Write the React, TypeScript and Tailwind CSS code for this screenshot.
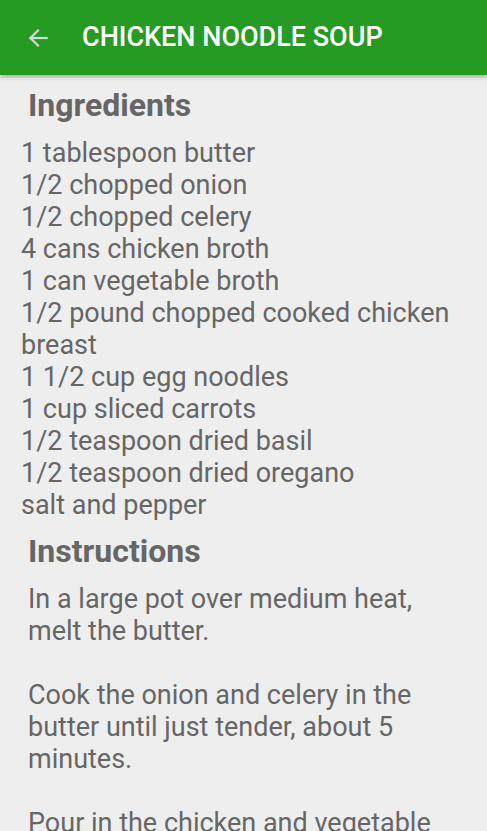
import React from "react";

const ingredients = [
  "1 tablespoon butter",
  "1/2 chopped onion",
  "1/2 chopped celery",
  "4 cans chicken broth",
  "1 can vegetable broth",
  "1/2 pound chopped cooked chicken breast",
  "1 1/2 cup egg noodles",
  "1 cup sliced carrots",
  "1/2 teaspoon dried basil",
  "1/2 teaspoon dried oregano",
  "salt and pepper",
];

const instructions = [
  "In a large pot over medium heat, melt the butter.",
  "Cook the onion and celery in the butter until just tender, about 5 minutes.",
  "Pour in the chicken and vegetable broths and stir in the chicken, noodles, carrots, basil, oregano, salt and pepper.",
];

export default function App() {
  return (
    <div
      className="w-[487px] h-[831px] overflow-hidden bg-[#eeeeee] text-[#666666]"
      style={{ fontFamily: "Roboto, 'Noto Sans', sans-serif" }}
    >
      <header className="relative z-10 h-[75px] bg-[#259b24] flex items-center shadow-[0_2px_4px_rgba(0,0,0,0.3)]">
        <div className="w-[82px] flex items-center pl-[25px]">
          <svg width="26" height="26" viewBox="0 0 24 24" fill="none" stroke="#d8d8d8" strokeWidth="2" strokeLinecap="square">
            <path d="M20 12H5" />
            <path d="M12 5l-7 7 7 7" />
          </svg>
        </div>
        <h1 className="text-white text-[27px] font-medium leading-none">CHICKEN NOODLE SOUP</h1>
      </header>
      <main>
        <h2 className="pl-[28px] pt-[10px] text-[32px] font-bold leading-[40px]">Ingredients</h2>
        <div className="pl-[21px] pr-[28px] pt-[12px]">
          {ingredients.map((t) => (
            <div key={t} className="text-[27px] leading-[32px]">{t}</div>
          ))}
        </div>
        <h2 className="pl-[28px] pt-[10px] text-[32px] font-bold leading-[40px]">Instructions</h2>
        <div className="pl-[28px] pr-[28px] pt-[12px]">
          {instructions.map((t) => (
            <p key={t} className="text-[27px] leading-[32px] mb-[32px]">{t}</p>
          ))}
        </div>
      </main>
    </div>
  );
}
